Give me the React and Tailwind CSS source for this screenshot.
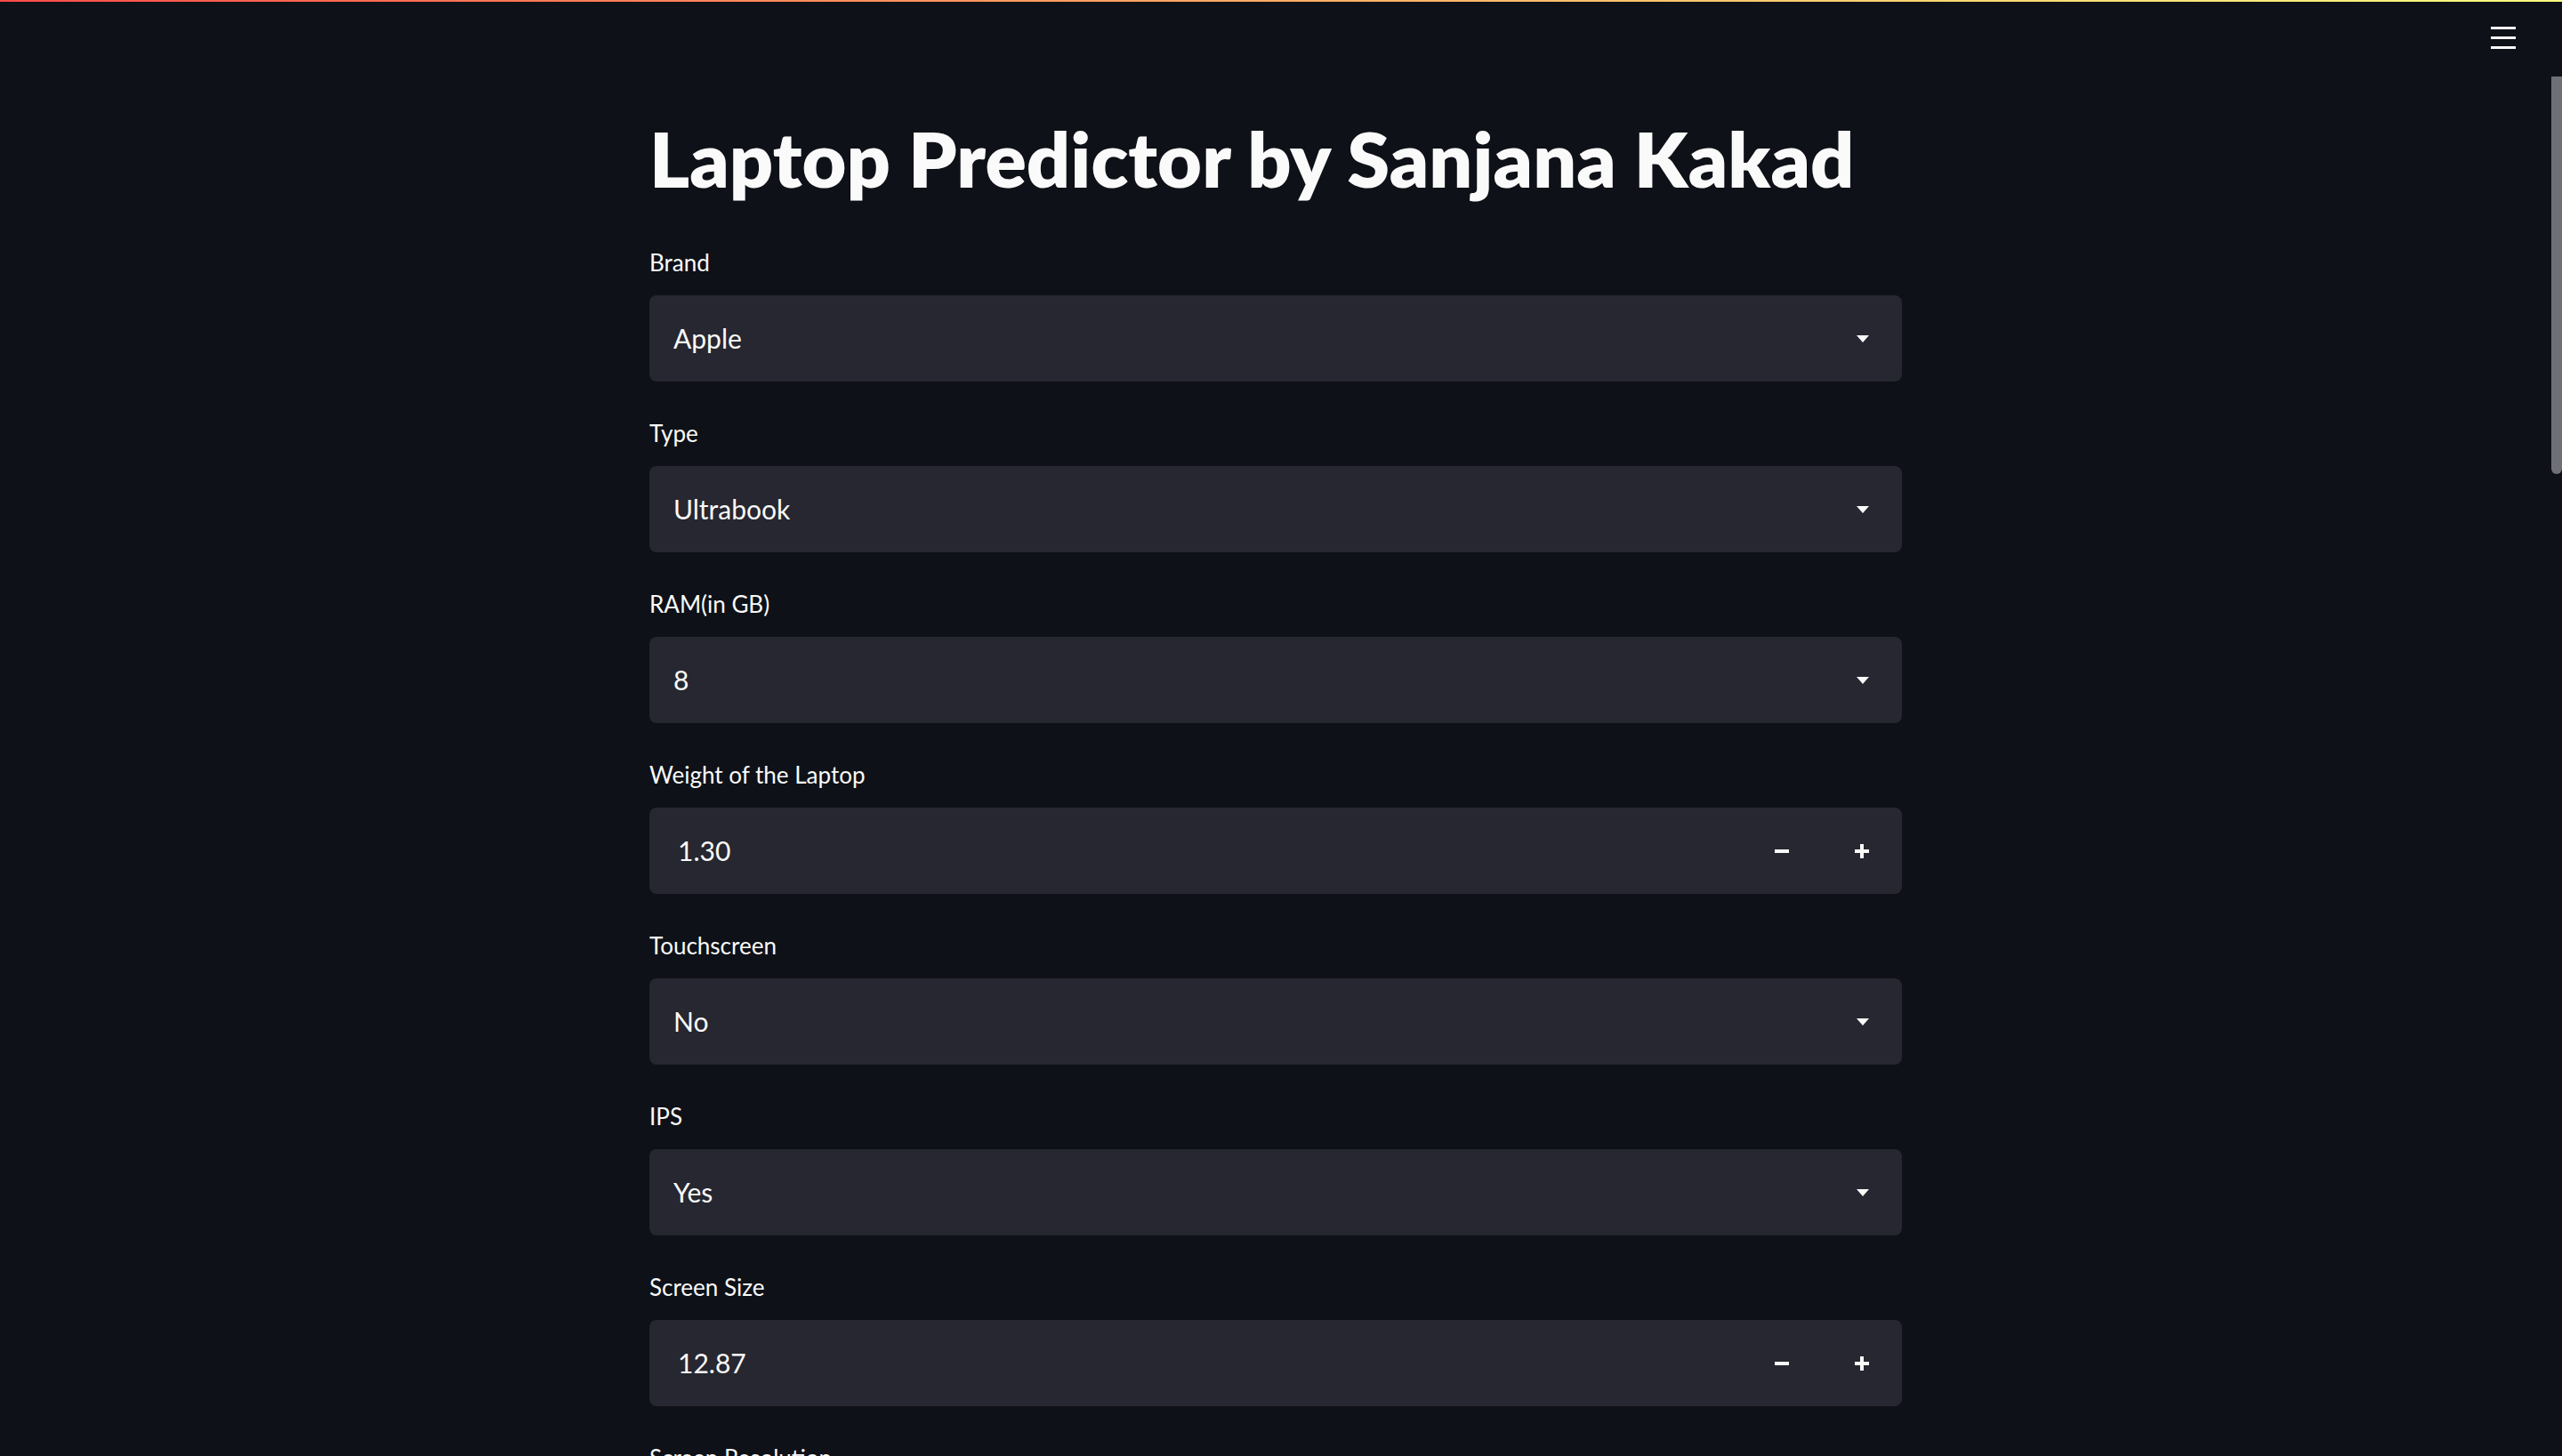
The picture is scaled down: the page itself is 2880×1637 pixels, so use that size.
import React from 'react';

const fields = [
    { label: 'Brand', value: 'Apple', kind: 'select' },
    { label: 'Type', value: 'Ultrabook', kind: 'select' },
    { label: 'RAM(in GB)', value: '8', kind: 'select' },
    { label: 'Weight of the Laptop', value: '1.30', kind: 'number' },
    { label: 'Touchscreen', value: 'No', kind: 'select' },
    { label: 'IPS', value: 'Yes', kind: 'select' },
    { label: 'Screen Size', value: '12.87', kind: 'number' },
    { label: 'Screen Resolution', value: '1920x1080', kind: 'select' },
];

const Caret = () => (
    <svg width="16" height="10" viewBox="0 0 16 10" className="shrink-0">
        <path d="M1 1 L15 1 L8 9 Z" fill="#fafafa" />
    </svg>
);

const Field = ({ label, value, kind }) => (
    <div className="flex flex-col mb-[39px]">
        <label className="h-[38px] flex items-center text-[26px] leading-none text-[#fafafa]">{label}</label>
        <div className="mt-[18px] h-[97px] rounded-[8px] bg-[#262730] flex items-center">
            {kind === 'select' ? (
                <>
                    <span className="flex-1 pl-[27px] text-[30px] text-[#fafafa]">{value}</span>
                    <div className="w-[88px] flex items-center justify-center pr-[1px]">
                        <Caret />
                    </div>
                </>
            ) : (
                <>
                    <span className="flex-1 pl-[32px] text-[30px] text-[#fafafa]">{value}</span>
                    <div className="w-[90px] h-full flex items-center justify-center">
                        <div className="w-[16px] h-[4px] bg-[#fafafa]" />
                    </div>
                    <div className="w-[90px] h-full flex items-center justify-center relative">
                        <div className="w-[16px] h-[4px] bg-[#fafafa]" />
                        <div className="absolute w-[4px] h-[16px] bg-[#fafafa]" />
                    </div>
                </>
            )}
        </div>
    </div>
);

export default function App() {
    return (
        <div className="h-screen w-full bg-[#0e1117] relative overflow-hidden font-['Lato','Noto_Sans',sans-serif] text-[#fafafa]">
            {/* Top decoration */}
            <div className="absolute top-0 left-0 right-0 h-[2px] bg-gradient-to-r from-[#ff4b4b] to-[#fffd80]" />

            {/* Menu */}
            <div className="absolute top-[30px] right-[52px] w-[28px] flex flex-col gap-[8px]">
                <div className="h-[3px] bg-[#fafafa]" />
                <div className="h-[3px] bg-[#fafafa]" />
                <div className="h-[3px] bg-[#fafafa]" />
            </div>

            {/* Scrollbar */}
            <div className="absolute right-0 top-[86px] w-[12px] h-[447px] bg-[#6f7075] rounded-b-[6px]" />

            <div className="flex justify-center pr-[12px]">
                <main className="w-[1408px] pt-[126px]">
                    <h1 className="text-[86px] font-extrabold leading-[1.2] tracking-[0.1px] mb-[47px]">Laptop Predictor by Sanjana Kakad</h1>
                    {fields.map(f => <Field key={f.label} {...f} />)}
                </main>
            </div>
        </div>
    );
}
